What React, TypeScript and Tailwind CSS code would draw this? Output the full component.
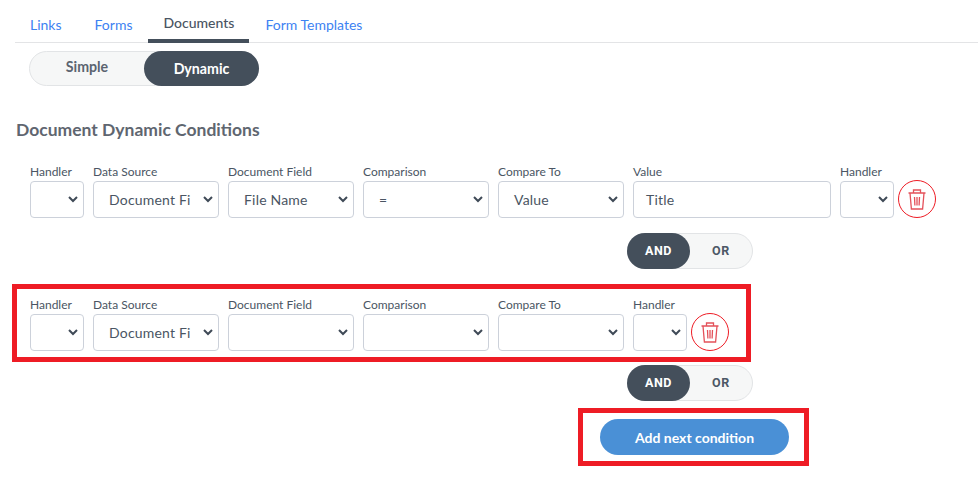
const font = { fontFamily: "Lato" };

function Chevron() {
  return (
    <svg className="absolute right-[5px] top-[14px] w-[10px] h-[7px] text-[#3f4a57]" viewBox="0 0 10 7" fill="none" stroke="currentColor" strokeWidth="2">
      <path d="M1 1l4 4 4-4" />
    </svg>
  );
}

function Field({ label, value, width, input }: { label: string; value?: string; width: string; input?: boolean }) {
  return (
    <div className={`${width} shrink-0`}>
      <div className="h-[17px] text-[12px] leading-[15px] text-[#4a5563] whitespace-nowrap">{label}</div>
      <div className="relative h-[37px] rounded-[4px] border border-[#ccd1da] bg-white overflow-hidden">
        <div className={`${input ? "pl-[12px]" : "pl-[15px]"} text-[14px] leading-[35px] tracking-[0.2px] text-[#4a5563] whitespace-nowrap`}>{value}</div>
        {!input && <Chevron />}
      </div>
    </div>
  );
}

function TrashButton() {
  return (
    <div className="w-[38px] h-[38px] ml-[4px] mt-[16px] shrink-0 rounded-full border border-[#ee1c25] flex items-center justify-center">
      <svg className="w-[18px] h-[21px] text-[#e4515a]" viewBox="0 0 18 21" fill="none" stroke="currentColor" strokeWidth="1.3">
        <path d="M0.5 4h17M5.5 4V1h7v3M2 4l1.4 16h11.2L16 4M6.5 8l.4 8.5M9 8v8.5M11.5 8l-.4 8.5" />
      </svg>
    </div>
  );
}

function AndOr() {
  return (
    <div className="w-[126px] h-[36px] flex rounded-full border border-[#e2e4e6] bg-[#f6f7f7] text-[12.5px] font-bold tracking-[0.6px]" style={{ fontFamily: "Roboto" }}>
      <div className="w-[63px] -my-px -ml-px rounded-full bg-[#444f5b] text-white flex items-center justify-center">AND</div>
      <div className="flex-1 flex items-center justify-center text-[#4d5866]">OR</div>
    </div>
  );
}

export default function App() {
  return (
    <div className="w-[978px] h-[489px] bg-white overflow-hidden" style={font}>
      <div className="ml-[15px] h-[43px] flex border-b border-[#e3e4e6] text-[14px] text-[#3d82f2]">
        <div className="ml-[15px] mt-[14px]">Links</div>
        <div className="ml-[33px] mt-[14px]">Forms</div>
        <div className="ml-[16px] w-[101px] h-[43px] border-b-[4px] border-[#444f5b] pt-[12px] text-center font-medium text-[#4a5563]">Documents</div>
        <div className="ml-[16px] mt-[14px]">Form Templates</div>
      </div>
      <div className="ml-[29px] mt-[8px] w-[230px] h-[35px] flex rounded-full border border-[#e2e4e6] bg-[#f6f7f7] text-[14.2px] font-bold">
        <div className="flex-1 flex items-center justify-center pb-[3px] text-[#5b6470]">Simple</div>
        <div className="w-[115px] -my-px -mr-px rounded-full bg-[#444f5b] text-white flex items-center justify-center">Dynamic</div>
      </div>
      <h2 className="ml-[16px] mt-[32px] h-[24px] text-[17.5px] leading-[24px] font-bold text-[#5f6670]">Document Dynamic Conditions</h2>

      <div className="ml-[30px] mt-[22px] flex gap-[9px]">
        <Field label="Handler" width="w-[54px]" />
        <Field label="Data Source" value="Document Fi" width="w-[126px]" />
        <Field label="Document Field" value="File Name" width="w-[126px]" />
        <Field label="Comparison" value="=" width="w-[126px]" />
        <Field label="Compare To" value="Value" width="w-[126px]" />
        <Field label="Value" value="Title" width="w-[198px]" input />
        <Field label="Handler" width="w-[54px]" />
        <div className="-ml-[9px]"><TrashButton /></div>
      </div>
      <div className="ml-[627px] mt-[15px]"><AndOr /></div>

      <div className="ml-[12px] mt-[15px] w-[739px] h-[78px] border-[5px] border-[#ee1c25] pl-[13px] pt-[8px] flex gap-[9px]">
        <Field label="Handler" width="w-[54px]" />
        <Field label="Data Source" value="Document Fi" width="w-[126px]" />
        <Field label="Document Field" width="w-[126px]" />
        <Field label="Comparison" width="w-[126px]" />
        <Field label="Compare To" width="w-[126px]" />
        <Field label="Handler" width="w-[54px]" />
        <div className="-ml-[9px]"><TrashButton /></div>
      </div>
      <div className="ml-[627px] mt-[3px]"><AndOr /></div>

      <div className="ml-[578px] mt-[7px] w-[231px] h-[58px] border-[5px] border-[#ee1c25] pl-[17px] pt-[6px]">
        <div className="w-[189px] h-[36px] rounded-full bg-[#4a90d6] text-white text-[14px] font-bold flex items-center justify-center">Add next condition</div>
      </div>
    </div>
  );
}
